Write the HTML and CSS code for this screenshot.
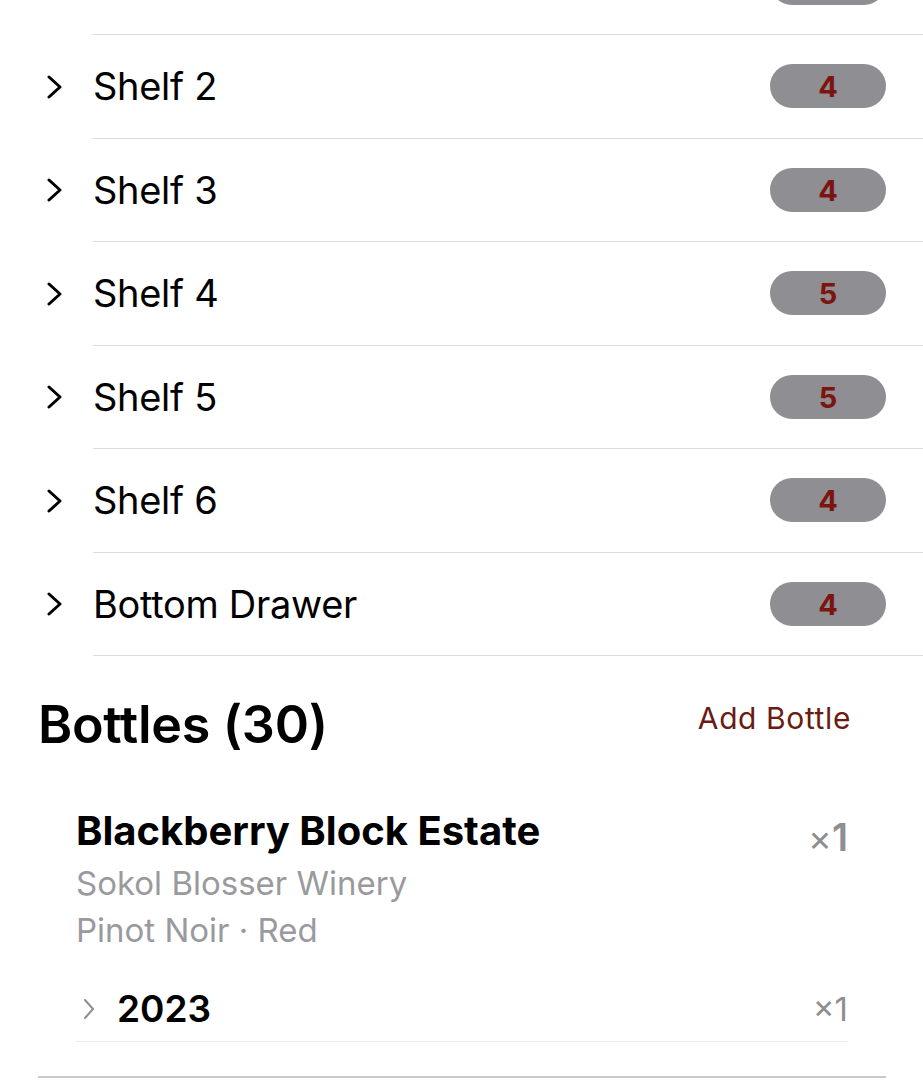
FILE: index.html
```html
<!DOCTYPE html>
<html>
<head>
<meta charset="utf-8">
<link rel="stylesheet" href="styles.css">
</head>
<body>
<div class="page">
  <ul class="shelves">
    <li class="row partial">
      <span class="chev"><svg viewBox="0 0 20 24" width="20" height="24"><path d="M4 2 L15 12 L4 22" fill="none" stroke="currentColor" stroke-width="3" stroke-linecap="round" stroke-linejoin="round"/></svg></span>
      <div class="row-main"><span class="label">Shelf 1</span><span class="badge">4</span></div>
    </li>
    <li class="row">
      <span class="chev"><svg viewBox="0 0 20 24" width="20" height="24"><path d="M4 2 L15 12 L4 22" fill="none" stroke="currentColor" stroke-width="3" stroke-linecap="round" stroke-linejoin="round"/></svg></span>
      <div class="row-main"><span class="label">Shelf 2</span><span class="badge">4</span></div>
    </li>
    <li class="row">
      <span class="chev"><svg viewBox="0 0 20 24" width="20" height="24"><path d="M4 2 L15 12 L4 22" fill="none" stroke="currentColor" stroke-width="3" stroke-linecap="round" stroke-linejoin="round"/></svg></span>
      <div class="row-main"><span class="label">Shelf 3</span><span class="badge">4</span></div>
    </li>
    <li class="row">
      <span class="chev"><svg viewBox="0 0 20 24" width="20" height="24"><path d="M4 2 L15 12 L4 22" fill="none" stroke="currentColor" stroke-width="3" stroke-linecap="round" stroke-linejoin="round"/></svg></span>
      <div class="row-main"><span class="label">Shelf 4</span><span class="badge">5</span></div>
    </li>
    <li class="row">
      <span class="chev"><svg viewBox="0 0 20 24" width="20" height="24"><path d="M4 2 L15 12 L4 22" fill="none" stroke="currentColor" stroke-width="3" stroke-linecap="round" stroke-linejoin="round"/></svg></span>
      <div class="row-main"><span class="label">Shelf 5</span><span class="badge">5</span></div>
    </li>
    <li class="row">
      <span class="chev"><svg viewBox="0 0 20 24" width="20" height="24"><path d="M4 2 L15 12 L4 22" fill="none" stroke="currentColor" stroke-width="3" stroke-linecap="round" stroke-linejoin="round"/></svg></span>
      <div class="row-main"><span class="label">Shelf 6</span><span class="badge">4</span></div>
    </li>
    <li class="row">
      <span class="chev"><svg viewBox="0 0 20 24" width="20" height="24"><path d="M4 2 L15 12 L4 22" fill="none" stroke="currentColor" stroke-width="3" stroke-linecap="round" stroke-linejoin="round"/></svg></span>
      <div class="row-main"><span class="label">Bottom Drawer</span><span class="badge">4</span></div>
    </li>
  </ul>

  <div class="section-head">
    <h2 class="section-title">Bottles (30)</h2>
    <a class="add-link">Add Bottle</a>
  </div>

  <div class="card">
    <div class="card-top">
      <div class="card-info">
        <div class="wine-name">Blackberry Block Estate</div>
        <div class="wine-sub">Sokol Blosser Winery</div>
        <div class="wine-sub">Pinot Noir · Red</div>
      </div>
      <div class="qty-big">×<b>1</b></div>
    </div>
    <div class="vintage">
      <span class="vchev"><svg viewBox="0 0 14 24" width="14" height="24"><path d="M3 3 L11 12 L3 21" fill="none" stroke="currentColor" stroke-width="2" stroke-linecap="round" stroke-linejoin="round"/></svg></span>
      <span class="year">2023</span>
      <span class="qty-small">×1</span>
    </div>
  </div>
</div>
</body>
</html>
```

FILE: styles.css
```css
* { box-sizing: border-box; }
html, body { margin: 0; padding: 0; background: #ffffff; }
body {
  font-family: "Inter", "Liberation Sans", sans-serif;
  color: #000;
  overflow: hidden;
}
.page { width: 923px; height: 1080px; overflow: hidden; }

.shelves {
  list-style: none;
  margin: -68.5px 0 0 0;
  padding: 0;
}
.row {
  display: flex;
  align-items: stretch;
  height: 103.5px;
}
.chev {
  width: 93px;
  display: flex;
  align-items: center;
  padding-left: 45px;
  color: #000;
}
.row-main {
  flex: 1;
  display: flex;
  align-items: center;
  justify-content: space-between;
  padding-right: 37px;
  border-bottom: 1.5px solid #dcdcde;
}
.label {
  font-size: 38px;
  font-weight: 400;
  letter-spacing: -0.3px;
}
.partial .label { color: #bbb; }
.badge {
  width: 116px;
  height: 44px;
  border-radius: 22px;
  background: #8e8e93;
  color: #7c1410;
  font-weight: 700;
  font-size: 29px;
  display: flex;
  align-items: center;
  justify-content: center;
  padding-top: 1px;
}

.section-head {
  display: flex;
  justify-content: space-between;
  align-items: center;
  padding: 38px 72px 0 38px;
  height: 100px;
}
.section-title {
  margin: 0;
  font-size: 52px;
  font-weight: 600;
  line-height: 62px;
  letter-spacing: -0.3px;
}
.add-link {
  font-size: 30px;
  letter-spacing: 0.6px;
  color: #6b1a14;
  margin-top: -14px;
}

.card {
  margin: 0 37px 0 38px;
  padding: 50px 38px 34px 38px;
  border-bottom: 2px solid #c9c9cc;
}
.card-top {
  display: flex;
  justify-content: space-between;
  align-items: flex-start;
}
.wine-name {
  font-size: 40px;
  font-weight: 700;
  line-height: 50px;
  letter-spacing: 0;
}
.wine-sub {
  font-size: 33px;
  color: #9a9a9e;
  line-height: 47px;
}
.wine-name + .wine-sub { margin-top: 4px; }
.qty-big {
  font-size: 36px;
  color: #8e8e93;
  line-height: 50px;
  margin-top: 6px;
}
.qty-big b { font-size: 38px; font-weight: 600; }

.vintage {
  margin-top: 30px;
  display: flex;
  align-items: center;
  height: 58px;
  padding-bottom: 8px;
  border-bottom: 1px solid #ececec;
}
.vchev { color: #8e8e93; width: 41px; padding-left: 6px; display: flex; }
.year {
  flex: 1;
  font-size: 37px;
  font-weight: 600;
}
.qty-small {
  font-size: 33px;
  color: #8e8e93;
}
```
